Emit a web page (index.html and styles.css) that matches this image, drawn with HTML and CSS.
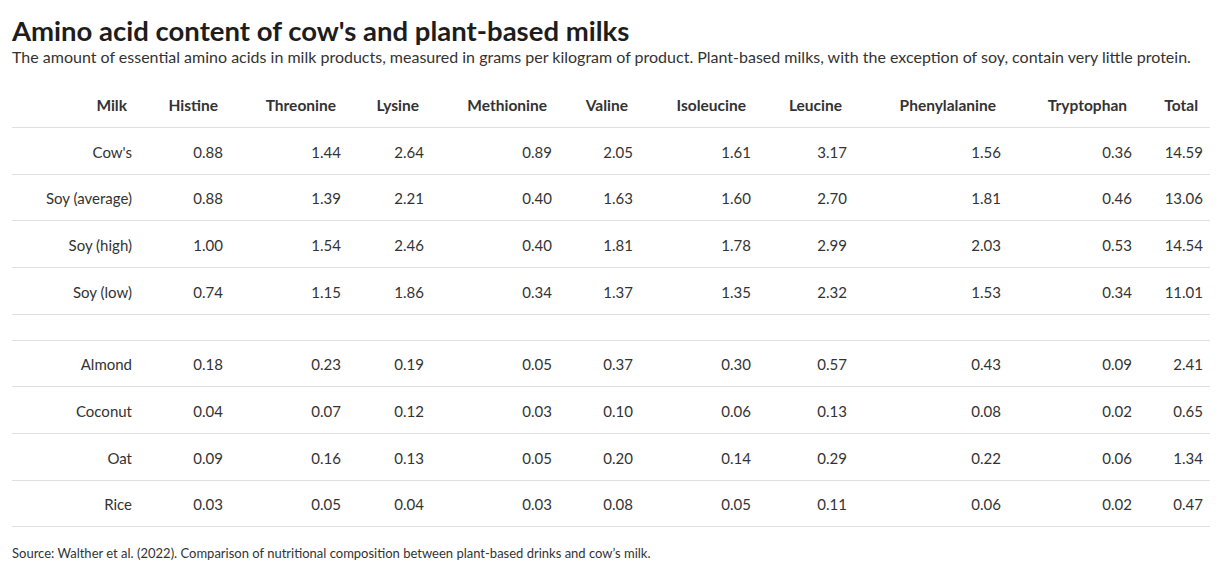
FILE: index.html
```html
<!DOCTYPE html>
<html lang="en">
<head>
<meta charset="utf-8">
<title>Amino acid content of cow's and plant-based milks</title>
<link rel="stylesheet" href="styles.css">
</head>
<body>
<div class="chart">
  <h1 class="title">Amino acid content of cow's and plant-based milks</h1>
  <p class="subtitle">The amount of essential amino acids in milk products, measured in grams per kilogram of product. Plant-based milks, with the exception of soy, contain very little protein.</p>
  <div class="table">
    <div class="row head">
      <div>Milk</div><div>Histine</div><div>Threonine</div><div>Lysine</div><div>Methionine</div><div>Valine</div><div>Isoleucine</div><div>Leucine</div><div>Phenylalanine</div><div>Tryptophan</div><div>Total</div>
    </div>
    <div class="row"><div>Cow's</div><div>0.88</div><div>1.44</div><div>2.64</div><div>0.89</div><div>2.05</div><div>1.61</div><div>3.17</div><div>1.56</div><div>0.36</div><div>14.59</div></div>
    <div class="row"><div>Soy (average)</div><div>0.88</div><div>1.39</div><div>2.21</div><div>0.40</div><div>1.63</div><div>1.60</div><div>2.70</div><div>1.81</div><div>0.46</div><div>13.06</div></div>
    <div class="row"><div>Soy (high)</div><div>1.00</div><div>1.54</div><div>2.46</div><div>0.40</div><div>1.81</div><div>1.78</div><div>2.99</div><div>2.03</div><div>0.53</div><div>14.54</div></div>
    <div class="row"><div>Soy (low)</div><div>0.74</div><div>1.15</div><div>1.86</div><div>0.34</div><div>1.37</div><div>1.35</div><div>2.32</div><div>1.53</div><div>0.34</div><div>11.01</div></div>
    <div class="row spacer"></div>
    <div class="row"><div>Almond</div><div>0.18</div><div>0.23</div><div>0.19</div><div>0.05</div><div>0.37</div><div>0.30</div><div>0.57</div><div>0.43</div><div>0.09</div><div>2.41</div></div>
    <div class="row"><div>Coconut</div><div>0.04</div><div>0.07</div><div>0.12</div><div>0.03</div><div>0.10</div><div>0.06</div><div>0.13</div><div>0.08</div><div>0.02</div><div>0.65</div></div>
    <div class="row"><div>Oat</div><div>0.09</div><div>0.16</div><div>0.13</div><div>0.05</div><div>0.20</div><div>0.14</div><div>0.29</div><div>0.22</div><div>0.06</div><div>1.34</div></div>
    <div class="row"><div>Rice</div><div>0.03</div><div>0.05</div><div>0.04</div><div>0.03</div><div>0.08</div><div>0.05</div><div>0.11</div><div>0.06</div><div>0.02</div><div>0.47</div></div>
  </div>
  <p class="source">Source: Walther et al. (2022). Comparison of nutritional composition between plant-based drinks and cow’s milk.</p>
</div>
</body>
</html>
```

FILE: styles.css
```css
html, body {
  margin: 0;
  padding: 0;
  background: #ffffff;
}

body {
  font-family: Lato, "Noto Sans", sans-serif;
  color: #333333;
}

.chart {
  padding: 16px 12px 0 12px;
}

.title {
  margin: 0;
  font-size: 27.5px;
  line-height: 30px;
  font-weight: 700;
  color: #1d1d1d;
}

.subtitle {
  margin: 1px 0 0 0;
  font-size: 16px;
  line-height: 20px;
  color: #333333;
}

.table {
  margin-top: 19px;
  display: flex;
  flex-direction: column;
}

.row {
  display: grid;
  grid-template-columns: 127px 91px 118px 83px 128px 81px 118px 96px 154px 131px 71px;
  align-items: center;
  height: 46.67px;
  box-sizing: border-box;
  border-bottom: 1px solid #e0e0e0;
  font-size: 15px;
  padding-top: 2px;
}

.row > div {
  text-align: right;
  padding-right: 7px;
  white-space: nowrap;
}

.row.head {
  height: 42px;
  padding-top: 0;
  padding-bottom: 3px;
  font-weight: 700;
  font-size: 15.5px;
  color: #333333;
}

.row.head > div {
  padding-right: 12px;
}

.row.spacer {
  height: 26px;
}

.source {
  margin: 18px 0 0 0;
  font-size: 13px;
  line-height: 16px;
  color: #333333;
}
```
